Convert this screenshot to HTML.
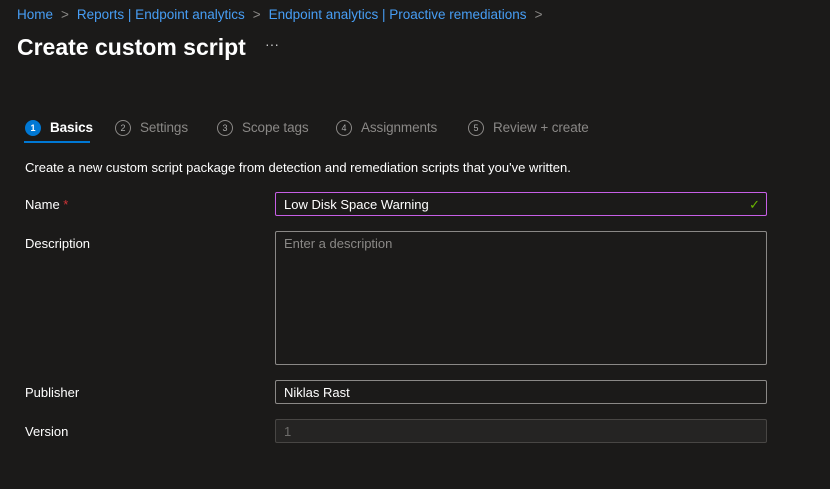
<!DOCTYPE html>
<html><head><meta charset="utf-8"><style>
body{margin:0;width:830px;height:489px;background:#1b1a19;font-family:"Liberation Sans",sans-serif;color:#fff;overflow:hidden;position:relative;}
.a{position:absolute;white-space:nowrap;}
.bc{top:7px;left:17px;font-size:13.5px;color:#479ef5;letter-spacing:0}
.bc span{color:#8a8886;margin:0 8px}
.t{top:34px;left:17px;font-size:23px;font-weight:bold;letter-spacing:0}
.dots{top:36px;left:265px;font-size:14px;color:#ccc}
.st{top:120px;font-size:13.5px;color:#8a8886;letter-spacing:-0.1px}
.c{display:inline-block;width:14px;height:14px;border:1px solid #8a8886;border-radius:50%;font-size:9px;text-align:center;line-height:14px;vertical-align:1px;margin-right:9px;color:#aaa}
.lab{font-size:13px;letter-spacing:0;color:#fff}
.in{position:absolute;left:275px;width:490px;border:1px solid #8a8886;border-radius:2px;background:#1b1a19;font-size:13px;letter-spacing:0;box-sizing:border-box;padding-left:8px}
</style></head><body>
<div class="a bc">Home<span>&gt;</span>Reports | Endpoint analytics<span>&gt;</span>Endpoint analytics | Proactive remediations<span>&gt;</span></div>
<div class="a t">Create custom script</div>
<div class="a dots">···</div>
<div class="a st" style="left:25px;color:#fff;font-weight:bold"><span class="c" style="background:#0078d4;border-color:#0078d4;color:#fff">1</span>Basics</div>
<div class="a" style="left:24px;top:141px;width:66px;height:2px;background:#0078d4"></div>
<div class="a st" style="left:115px"><span class="c">2</span>Settings</div>
<div class="a st" style="left:217px"><span class="c">3</span>Scope tags</div>
<div class="a st" style="left:336px"><span class="c">4</span>Assignments</div>
<div class="a st" style="left:468px"><span class="c">5</span>Review + create</div>
<div class="a lab" style="left:25px;top:160px">Create a new custom script package from detection and remediation scripts that you've written.</div>
<div class="a lab" style="left:25px;top:197px">Name <span style="color:#d13438">*</span></div>
<div class="in" style="top:192px;height:24px;line-height:23px;border-color:#c75fe6;width:492px">Low Disk Space Warning<span style="position:absolute;right:6px;color:#6bb700">✓</span></div>
<div class="a lab" style="left:25px;top:236px">Description</div>
<div class="in" style="top:231px;height:134px;line-height:23px;width:492px;color:#8a8886">Enter a description</div>
<div class="a lab" style="left:25px;top:385px">Publisher</div>
<div class="in" style="top:380px;height:24px;line-height:23px;width:492px">Niklas Rast</div>
<div class="a lab" style="left:25px;top:424px">Version</div>
<div class="in" style="top:419px;height:24px;line-height:23px;width:492px;background:#252423;border-color:#484644;color:#6e6d6b">1</div>
</body></html>
